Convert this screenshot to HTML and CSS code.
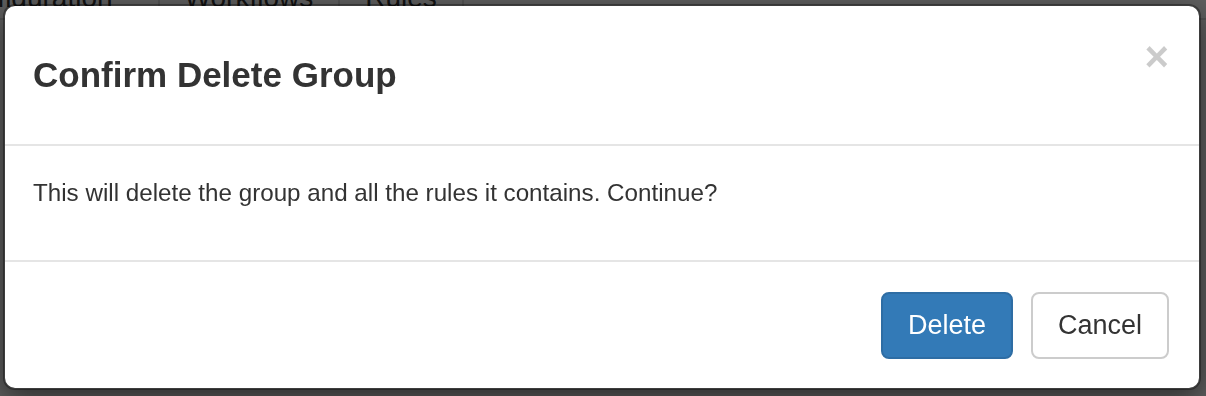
FILE: index.html
```html
<!DOCTYPE html>
<html lang="en">
<head>
    <meta charset="UTF-8">
    <meta name="viewport" content="width=device-width, initial-scale=1.0">
    <title>Confirm Delete Group</title>
    <link rel="stylesheet" href="styles.css">
</head>
<body>
    <!-- Page behind the dialog -->
    <div class="page">
        <ul class="page-tabs">
            <li class="first">Configuration</li>
            <li>Workflows</li>
            <li>Rules</li>
        </ul>
    </div>

    <div class="backdrop"></div>

    <!-- Dialog -->
    <div class="modal">
        <div class="modal-content">
            <div class="modal-header">
                <h4 class="modal-title">Confirm Delete Group</h4>
                <button class="close" type="button">&times;</button>
            </div>
            <div class="modal-body">
                <p>This will delete the group and all the rules it contains. Continue?</p>
            </div>
            <div class="modal-footer">
                <button class="btn btn-primary" type="button">Delete</button>
                <button class="btn btn-default" type="button">Cancel</button>
            </div>
        </div>
    </div>
</body>
</html>
```

FILE: styles.css
```css
body {
    margin: 0;
    font-family: "Liberation Sans", Arial, sans-serif;
    background-color: #fff;
    color: #333;
    overflow: hidden;
}

/* Page behind the dialog */
.page-tabs {
    display: flex;
    list-style: none;
    margin: -22px 0 0 -79px;
    padding: 0;
    font-size: 28px;
    line-height: 40px;
    border-bottom: 2px solid #ddd;
}

.page-tabs li {
    padding: 0 25px;
    border-right: 2px solid #ddd;
}

.page-tabs li.first {
    padding-right: 45px;
}

/* Backdrop */
.backdrop {
    position: fixed;
    top: 0;
    left: 0;
    right: 0;
    bottom: 0;
    background-color: rgba(0, 0, 0, 0.63);
}

/* Dialog */
.modal {
    position: fixed;
    top: 4px;
    left: 3px;
    right: 5px;
}

.modal-content {
    background-color: #fff;
    border: 2px solid rgba(0, 0, 0, 0.35);
    border-radius: 12px;
    box-shadow: 0 10px 30px rgba(0, 0, 0, 0.5);
    background-clip: padding-box;
}

.modal-header {
    display: flex;
    justify-content: space-between;
    align-items: flex-start;
    padding: 44px 30px 44px 28px;
    border-bottom: 2px solid #e5e5e5;
}

.modal-title {
    margin: 0;
    font-size: 35px;
    font-weight: bold;
    line-height: 50px;
    color: #333;
}

.close {
    margin-top: -14px;
    padding: 0;
    border: none;
    background: none;
    font-family: "Liberation Sans", Arial, sans-serif;
    font-size: 42px;
    font-weight: bold;
    line-height: 1;
    color: #000;
    opacity: 0.2;
    cursor: pointer;
}

.modal-body {
    padding: 30px 30px 30px 28px;
    font-size: 24.2px;
    line-height: 34px;
}

.modal-body p {
    margin: 0 0 20px;
}

.modal-footer {
    display: flex;
    justify-content: flex-end;
    gap: 18px;
    padding: 30px 30px 29px 28px;
    border-top: 2px solid #e5e5e5;
}

.btn {
    padding: 0 25px;
    font-family: "Liberation Sans", Arial, sans-serif;
    font-size: 27px;
    line-height: 63px;
    border: 2px solid transparent;
    border-radius: 8px;
    cursor: pointer;
}

.btn-primary {
    background-color: #337ab7;
    border-color: #2e6da4;
    color: #fff;
}

.btn-default {
    background-color: #fff;
    border-color: #ccc;
    color: #333;
}
```
